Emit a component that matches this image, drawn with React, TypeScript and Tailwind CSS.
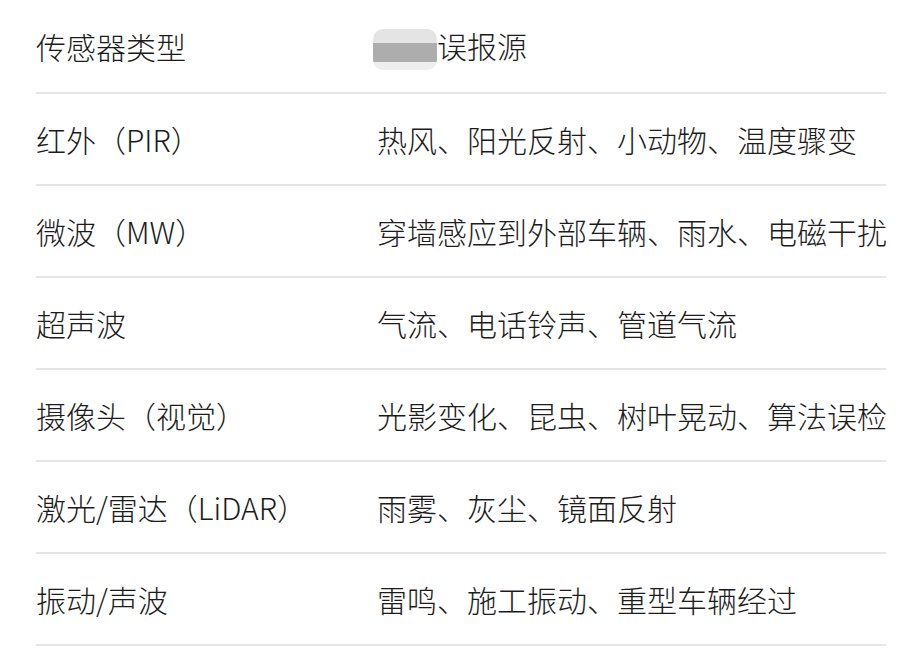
const rows: [string, string][] = [
  ['红外（PIR）', '热风、阳光反射、小动物、温度骤变'],
  ['微波（MW）', '穿墙感应到外部车辆、雨水、电磁干扰'],
  ['超声波', '气流、电话铃声、管道气流'],
  ['摄像头（视觉）', '光影变化、昆虫、树叶晃动、算法误检'],
  ['激光/雷达（LiDAR）', '雨雾、灰尘、镜面反射'],
  ['振动/声波', '雷鸣、施工振动、重型车辆经过'],
];

function Redacted() {
  return (
    <span className="inline-flex h-[41px] w-[64px] flex-col overflow-hidden rounded-[10px] align-middle">
      <span className="h-[14px] bg-[#e4e4e4]" />
      <span className="h-[19px] bg-[#adadad]" />
      <span className="h-[8px] bg-[#eeeeee]" />
    </span>
  );
}

export default function App() {
  return (
    <div
      className="min-h-[658px] bg-white pl-[36px] text-[30px] font-light text-[#1c1c1c]"
      style={{ fontFamily: '"Noto Sans CJK SC", "Noto Sans", sans-serif' }}
    >
      <div className="w-[850px]">
        <div className="grid h-[94px] grid-cols-[341px_1fr] items-center border-b-2 border-[#e6e6e6]">
          <div>传感器类型</div>
          <div className="flex items-center">
            <span className="-ml-[4px]">
              <Redacted />
            </span>
            <span>误报源</span>
          </div>
        </div>
        {rows.map(([type, source]) => (
          <div
            key={type}
            className="grid h-[92px] grid-cols-[341px_1fr] items-center border-b-2 border-[#e6e6e6]"
          >
            <div>{type}</div>
            <div className="whitespace-nowrap">{source}</div>
          </div>
        ))}
      </div>
    </div>
  );
}
